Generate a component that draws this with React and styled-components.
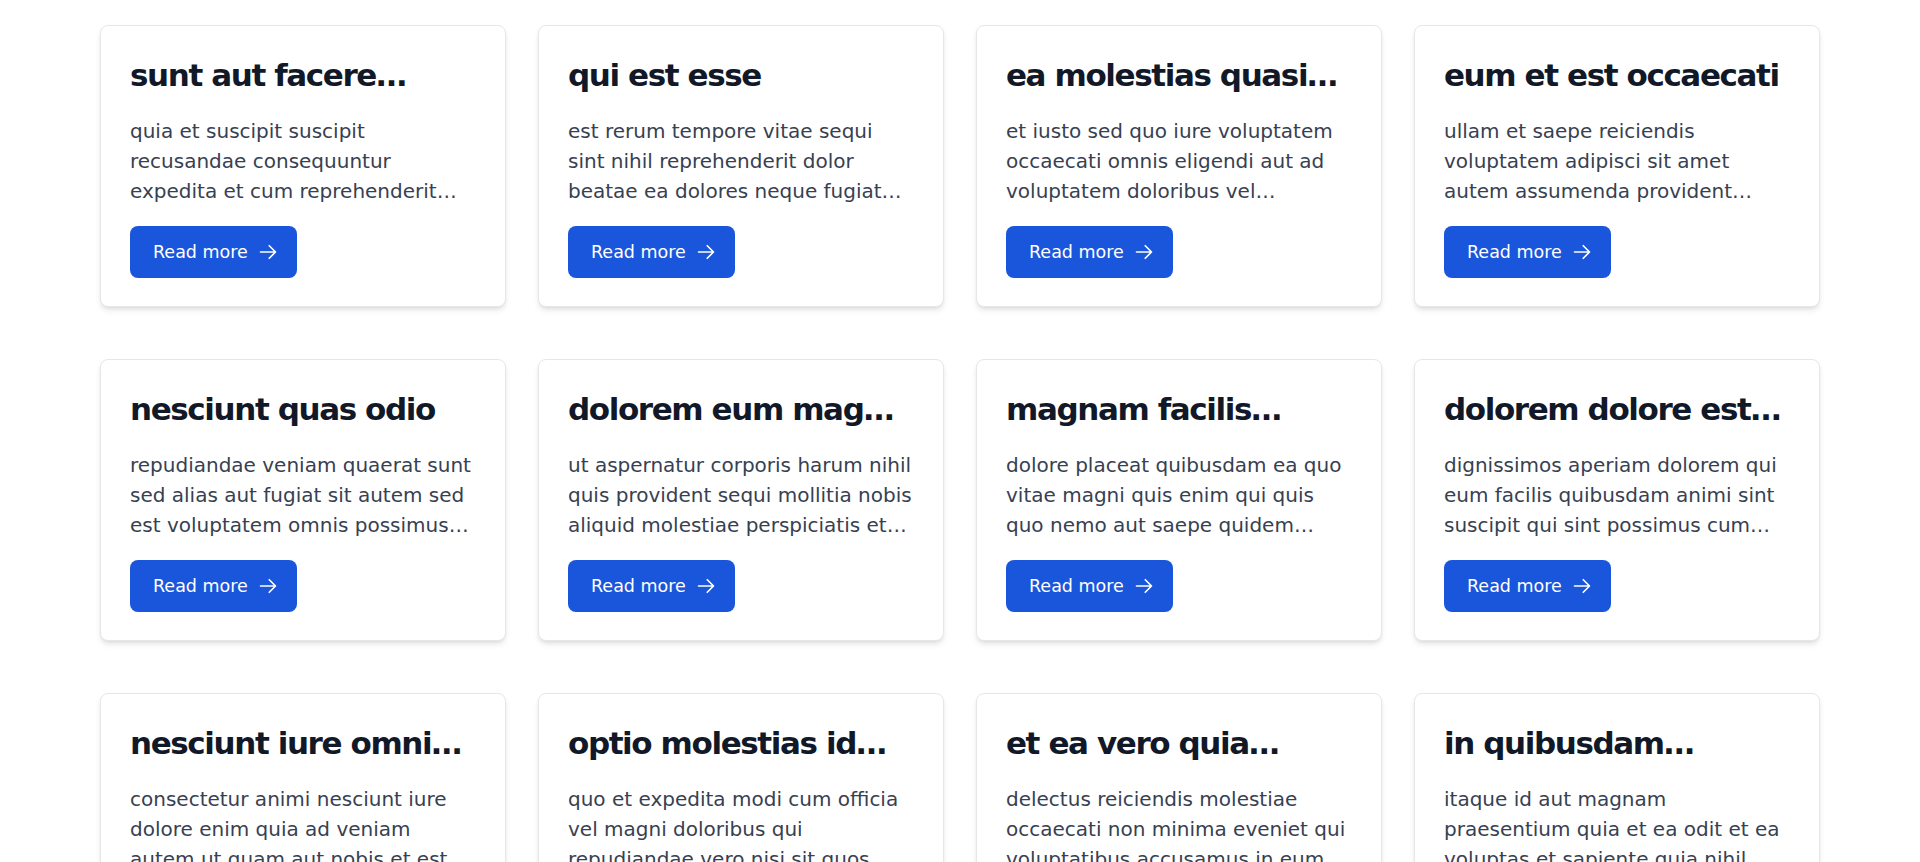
import React from 'react';
import styled, { createGlobalStyle } from 'styled-components';

const posts = [
  {
    id: 1,
    title: 'sunt aut facere repellat provident occaecati excepturi optio reprehenderit',
    body: 'quia et suscipit suscipit recusandae consequuntur expedita et cum reprehenderit molestiae ut ut quas totam nostrum rerum est autem sunt rem eveniet architecto',
  },
  {
    id: 2,
    title: 'qui est esse',
    body: 'est rerum tempore vitae sequi sint nihil reprehenderit dolor beatae ea dolores neque fugiat blanditiis voluptate porro vel nihil molestiae ut reiciendis qui aperiam non debitis possimus qui neque nisi nulla',
  },
  {
    id: 3,
    title: 'ea molestias quasi exercitationem repellat qui ipsa sit aut',
    body: 'et iusto sed quo iure voluptatem occaecati omnis eligendi aut ad voluptatem doloribus vel accusantium quis pariatur molestiae porro eius odio et labore et velit aut',
  },
  {
    id: 4,
    title: 'eum et est occaecati',
    body: 'ullam et saepe reiciendis voluptatem adipisci sit amet autem assumenda provident rerum culpa quis hic commodi nesciunt rem tenetur doloremque ipsam iure quis sunt voluptatem rerum illo velit',
  },
  {
    id: 5,
    title: 'nesciunt quas odio',
    body: 'repudiandae veniam quaerat sunt sed alias aut fugiat sit autem sed est voluptatem omnis possimus esse voluptatibus quis est aut tenetur dolor neque',
  },
  {
    id: 6,
    title: 'dolorem eum magni eos aperiam quia',
    body: 'ut aspernatur corporis harum nihil quis provident sequi mollitia nobis aliquid molestiae perspiciatis et ea nemo ab reprehenderit accusantium quas voluptate dolores velit et doloremque molestiae',
  },
  {
    id: 7,
    title: 'magnam facilis autem',
    body: 'dolore placeat quibusdam ea quo vitae magni quis enim qui quis quo nemo aut saepe quidem repellat excepturi ut quia sunt ut sequi eos ea sed quas',
  },
  {
    id: 8,
    title: 'dolorem dolore est ipsam',
    body: 'dignissimos aperiam dolorem qui eum facilis quibusdam animi sint suscipit qui sint possimus cum quaerat magni maiores excepturi ipsam ut commodi dolor voluptatum modi aut vitae',
  },
  {
    id: 9,
    title: 'nesciunt iure omnis dolorem tempora et accusantium',
    body: 'consectetur animi nesciunt iure dolore enim quia ad veniam autem ut quam aut nobis et est aut quod aut provident voluptas autem voluptas',
  },
  {
    id: 10,
    title: 'optio molestias id quia eum',
    body: 'quo et expedita modi cum officia vel magni doloribus qui repudiandae vero nisi sit quos veniam quod sed accusamus veritatis error',
  },
  {
    id: 11,
    title: 'et ea vero quia laudantium autem',
    body: 'delectus reiciendis molestiae occaecati non minima eveniet qui voluptatibus accusamus in eum beatae sit vel qui neque voluptates ut commodi qui incidunt ut animi commodi',
  },
  {
    id: 12,
    title: 'in quibusdam tempore odit est dolorem',
    body: 'itaque id aut magnam praesentium quia et ea odit et ea voluptas et sapiente quia nihil amet occaecati quia id voluptatem incidunt ea est distinctio odio',
  },
];

const GlobalStyle = createGlobalStyle`
  * {
    box-sizing: border-box;
  }
  body {
    margin: 0;
    background: #ffffff;
    font-family: 'DejaVu Sans', sans-serif;
  }
`;

const Page = styled.main`
  padding: 25px 100px;
`;

const Grid = styled.div`
  display: grid;
  grid-template-columns: repeat(4, 1fr);
  column-gap: 32px;
  row-gap: 52px;
`;

const Card = styled.article`
  background: #ffffff;
  border: 1px solid #e5e7eb;
  border-radius: 8px;
  padding: 29px 29px 28px;
  box-shadow: 0 4px 6px -1px rgba(0, 0, 0, 0.1), 0 2px 4px -2px rgba(0, 0, 0, 0.1);
`;

// line-clamp cuts at a word, which is what the titles do
const Clamp = styled.p`
  margin: 0;
  display: -webkit-box;
  -webkit-box-orient: vertical;
  -webkit-line-clamp: ${(p) => p.$lines};
  overflow: hidden;
`;

const Title = styled(Clamp).attrs({ as: 'h2' })`
  margin-bottom: 21px;
  font-size: 31px;
  line-height: 40px;
  font-weight: 700;
  letter-spacing: -1.4px;
  color: #111827;
`;

const Body = styled(Clamp)`
  margin-bottom: 20px;
  font-size: 20px;
  line-height: 30px;
  color: #374151;
`;

const Button = styled.a`
  display: inline-flex;
  align-items: center;
  gap: 10px;
  padding: 12px 19px 12px 23px;
  border-radius: 8px;
  background: #1a56db;
  color: #ffffff;
  font-size: 17.5px;
  line-height: 28px;
  text-decoration: none;
  cursor: pointer;
`;

const ArrowRight = () => (
  <svg
    width="20"
    height="20"
    viewBox="0 0 24 24"
    fill="none"
    stroke="currentColor"
    strokeWidth="2"
    strokeLinecap="round"
    strokeLinejoin="round"
  >
    <path d="M13.5 4.5 21 12m0 0-7.5 7.5M21 12H3" />
  </svg>
);

const PostCard = ({ post }) => (
  <Card>
    <Title $lines={1}>{post.title}</Title>
    <Body $lines={3}>{post.body}</Body>
    <Button href={`#post-${post.id}`}>
      Read more
      <ArrowRight />
    </Button>
  </Card>
);

const App = () => (
  <>
    <GlobalStyle />
    <Page>
      <Grid>
        {posts.map((post) => (
          <PostCard key={post.id} post={post} />
        ))}
      </Grid>
    </Page>
  </>
);

export default App;
